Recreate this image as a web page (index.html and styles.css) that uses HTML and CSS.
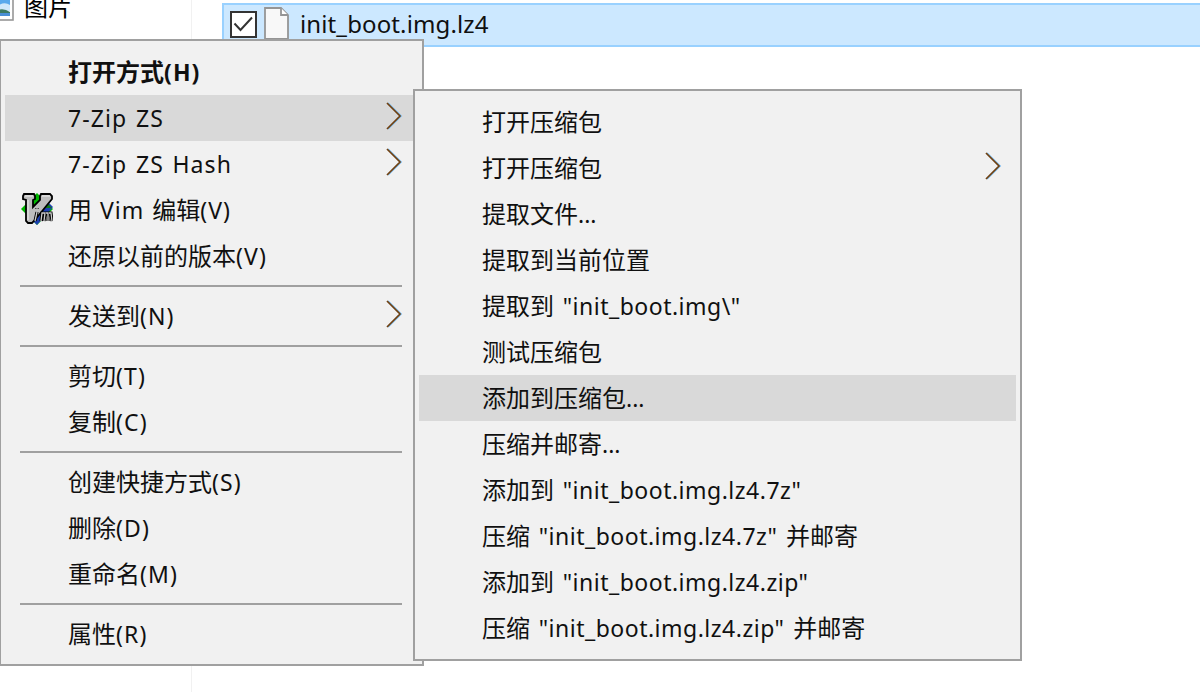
FILE: index.html
```html
<!DOCTYPE html>
<html lang="zh-CN">
<head>
<meta charset="utf-8">
<title>init_boot.img.lz4</title>
<link rel="stylesheet" href="styles.css">
</head>
<body>
<div class="explorer">
  <aside class="sidebar">
    <svg class="picture-icon" width="14" height="22" viewBox="0 0 14 22">
      <rect x="-6" y="-4" width="19" height="24" fill="#fff" stroke="#979797" stroke-width="1.600"/>
      <rect x="-2" y="0" width="12" height="10" fill="#58a9ec"/>
      <path d="M-2 6 Q4 1 10 5V11H-2Z" fill="#cfe8fa"/>
      <path d="M-2 10Q4 8 10 12V13H-2Z" fill="#3c7a62"/>
      <rect x="-2" y="13" width="12" height="3" fill="#4a8fd6"/>
    </svg>
    <span class="nav-label">图片</span>
  </aside>
  <main class="files">
    <div class="file-row">
      <svg class="check" width="28" height="28" viewBox="0 0 28 28"><rect x="1" y="1" width="25" height="25" fill="#fff" stroke="#333" stroke-width="2"/><path d="M4.500 12.500L10.500 19L22 6.500" fill="none" stroke="#333" stroke-width="2"/></svg>
      <svg class="doc" width="25" height="33" viewBox="0 0 25 33"><path d="M1 1H17L24 8V32H1Z" fill="#f8f8f8" stroke="#959595" stroke-width="1.800"/><path d="M17 1V8H24" fill="#fff" stroke="#959595" stroke-width="1.800"/></svg>
      <span class="file-name">init_boot.img.lz4</span>
    </div>
  </main>
</div>

<ul class="menu context-menu">
  <li class="item strong"><span class="han">打开方式</span><span class="latin">(H)</span></li>
  <li class="item active"><span class="latin">7-Zip ZS</span><svg class="arrow" viewBox="0 0 18 28"><path class="fringe" d="M3 1L16 14L3 27"/><path d="M2 1L15 14L2 27"/></svg></li>
  <li class="item"><span class="latin">7-Zip ZS Hash</span><svg class="arrow" viewBox="0 0 18 28"><path class="fringe" d="M3 1L16 14L3 27"/><path d="M2 1L15 14L2 27"/></svg></li>
  <li class="item">
    <svg class="vim" viewBox="0 0 32 32">
      <path d="M16 0L32 16L16 32L0 16Z" fill="#00b800"/>
      <path d="M32 14L16 32L9 25L26 8Z" fill="#1c3fb0"/>
      <path d="M25 9L31 15H20Z" fill="#0a7a1a"/>
      <path d="M3 1H13L14 3V6L12 7V14L19 7V3L20 1H29L31 3V6L13 28L11 30H7L5 28V7L2 6V3Z" fill="#bdbdbd" stroke="#000" stroke-width="1.800"/>
      <path d="M4 3H12M7 7V27M21 3H29" fill="none" stroke="#f0f0f0" stroke-width="1"/>
      <path d="M16 15V16M16 19L14 28M20 28L21 20H24L23 28M25 20H27L27 28M28 20H30L31 28" fill="none" stroke="#000" stroke-width="3.200"/>
      <path d="M16 15V16M16 19L14 28M20 28L21 20H24L23 28M25 20H27L27 28M28 20H30L31 28" fill="none" stroke="#ccc" stroke-width="1.300"/>
    </svg>
    <span class="han">用</span><span class="latin vim-word"> Vim </span><span class="han">编辑</span><span class="latin">(V)</span></li>
  <li class="item"><span class="han">还原以前的版本</span><span class="latin">(V)</span></li>
  <li class="separator"></li>
  <li class="item"><span class="han">发送到</span><span class="latin">(N)</span><svg class="arrow" viewBox="0 0 18 28"><path class="fringe" d="M3 1L16 14L3 27"/><path d="M2 1L15 14L2 27"/></svg></li>
  <li class="separator"></li>
  <li class="item"><span class="han">剪切</span><span class="latin">(T)</span></li>
  <li class="item"><span class="han">复制</span><span class="latin">(C)</span></li>
  <li class="separator"></li>
  <li class="item"><span class="han">创建快捷方式</span><span class="latin">(S)</span></li>
  <li class="item"><span class="han">删除</span><span class="latin">(D)</span></li>
  <li class="item"><span class="han">重命名</span><span class="latin">(M)</span></li>
  <li class="separator"></li>
  <li class="item"><span class="han">属性</span><span class="latin">(R)</span></li>
</ul>

<ul class="menu submenu">
  <li class="item"><span class="han">打开压缩包</span></li>
  <li class="item"><span class="han">打开压缩包</span><svg class="arrow" viewBox="0 0 18 28"><path class="fringe" d="M3 1L16 14L3 27"/><path d="M2 1L15 14L2 27"/></svg></li>
  <li class="item"><span class="han">提取文件</span><span class="latin dots">...</span></li>
  <li class="item"><span class="han">提取到当前位置</span></li>
  <li class="item"><span class="han">提取到</span><span class="latin"> "init_boot.img\"</span></li>
  <li class="item"><span class="han">测试压缩包</span></li>
  <li class="item active"><span class="han">添加到压缩包</span><span class="latin dots">...</span></li>
  <li class="item"><span class="han">压缩并邮寄</span><span class="latin dots">...</span></li>
  <li class="item"><span class="han">添加到</span><span class="latin"> "init_boot.img.lz4.7z"</span></li>
  <li class="item"><span class="han">压缩</span><span class="latin"> "init_boot.img.lz4.7z" </span><span class="han">并邮寄</span></li>
  <li class="item"><span class="han">添加到</span><span class="latin"> "init_boot.img.lz4.zip"</span></li>
  <li class="item"><span class="han">压缩</span><span class="latin"> "init_boot.img.lz4.zip" </span><span class="han">并邮寄</span></li>
</ul>
</body>
</html>
```
FILE: styles.css
```css
* { box-sizing: border-box; }
body {
  margin: 0;
  width: 1200px;
  height: 692px;
  overflow: hidden;
  position: relative;
  background: #fff;
  color: #101010;
  font: 24px/46px "Noto Sans CJK SC", sans-serif;
}
.explorer { display: flex; height: 692px; }
.sidebar { display: flex; flex: none; align-items: flex-start; width: 192px; border-right: 1px solid #f1f1f1; }
.picture-icon { flex: none; }
.nav-label { margin: -17px 0 0 10px; color: #000; }
.files { flex: 1; min-width: 0; padding: 3px 0 0 30px; }
.file-row {
  display: flex;
  align-items: flex-start;
  height: 44px;
  padding: 6px 0 0 6px;
  background: #cce8ff;
  border: 2px solid #99d1ff;
  border-right: 0;
}
.doc { margin: -4px 0 0 6px; }
.file-name { margin-left: 11px; font: 24px/26px "Noto Sans", sans-serif; letter-spacing: 0.12px; white-space: pre; }
.menu {
  position: absolute;
  margin: 0;
  padding: 8px 4px 6px;
  list-style: none;
  background: #f1f1f1;
  border: 2px solid #a0a0a0;
}
.context-menu { left: -1px; top: 39px; width: 425px; height: 627px; }
.submenu { left: 413px; top: 89px; width: 609px; height: 572px; }
.item { position: relative; display: flex; align-items: center; height: 46px; padding-left: 63px; white-space: pre; }
.han { padding-bottom: 2px; }
.active { background: #d9d9d9; }
.strong { font-weight: 700; }
.latin { font-family: "Noto Sans", sans-serif; font-size: 23px; letter-spacing: 1.1px; word-spacing: 1.5px; }
.submenu .latin { letter-spacing: 0.5px; word-spacing: 2.2px; }
.submenu .dots { letter-spacing: 0; }
.context-menu .vim-word { letter-spacing: 1px; word-spacing: 1px; }
.arrow { position: absolute; right: 14px; top: 7px; width: 18px; height: 28px; fill: none; stroke: #704010; stroke-width: 1.7; }
.context-menu .arrow { right: 15px; }
.fringe { stroke: #79bdf5; }
.vim { position: absolute; left: 16px; top: 6px; width: 32px; height: 32px; }
.separator { height: 14px; margin: 0 16px 0 15px; padding-top: 6px; }
.separator::before { content: ""; display: block; height: 2px; background: #a0a0a0; }
```
